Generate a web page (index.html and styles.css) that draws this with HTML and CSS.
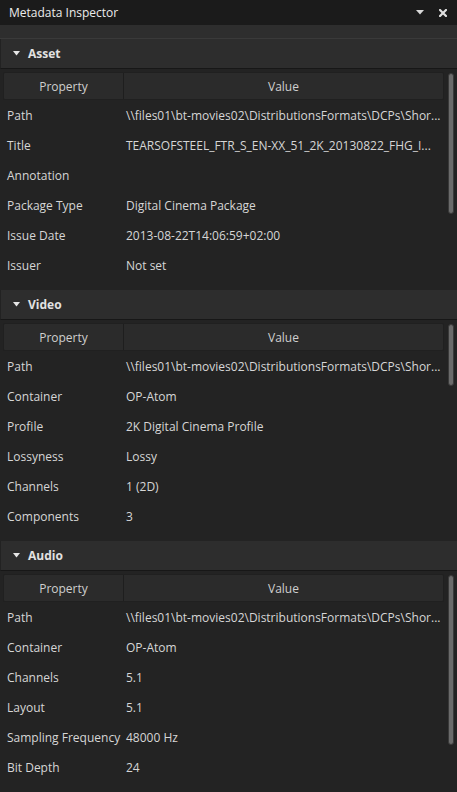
FILE: index.html
```html
<!DOCTYPE html>
<html>
<head>
<meta charset="utf-8">
<link rel="stylesheet" href="styles.css">
</head>
<body>
<div class="panel">
  <div class="titlebar">
    <span class="title">Metadata Inspector</span>
    <span class="tb-icons">
      <svg class="ico-down" width="8" height="5" viewBox="0 0 8 5"><path d="M0 0 H8 L4 4.5 Z" fill="#d8d8d8"/></svg>
      <svg class="ico-close" width="8" height="8" viewBox="0 0 8 8"><path d="M1 1 L7 7 M7 1 L1 7" stroke="#e0e0e0" stroke-width="2.2" stroke-linecap="square"/></svg>
    </span>
  </div>
  <div class="band"></div>

  <div class="section">
    <div class="sec-head">
      <svg class="tri" width="7" height="5" viewBox="0 0 7 5"><path d="M0 0 H7 L3.5 4.5 Z" fill="#e6e6e6"/></svg>
      <span>Asset</span>
    </div>
    <div class="tablewrap">
      <div class="table">
        <div class="thead"><div class="th prop">Property</div><div class="th val">Value</div></div>
        <div class="row"><div class="c prop">Path</div><div class="c val">\\files01\bt-movies02\DistributionsFormats\DCPs\Shor...</div></div>
        <div class="row"><div class="c prop">Title</div><div class="c val">TEARSOFSTEEL_FTR_S_EN-XX_51_2K_20130822_FHG_I...</div></div>
        <div class="row"><div class="c prop">Annotation</div><div class="c val"></div></div>
        <div class="row"><div class="c prop">Package Type</div><div class="c val">Digital Cinema Package</div></div>
        <div class="row"><div class="c prop">Issue Date</div><div class="c val">2013-08-22T14:06:59+02:00</div></div>
        <div class="row"><div class="c prop">Issuer</div><div class="c val">Not set</div></div>
      </div>
      <div class="scroll"><div class="thumb t-asset"></div></div>
    </div>
  </div>

  <div class="section">
    <div class="sec-head">
      <svg class="tri" width="7" height="5" viewBox="0 0 7 5"><path d="M0 0 H7 L3.5 4.5 Z" fill="#e6e6e6"/></svg>
      <span>Video</span>
    </div>
    <div class="tablewrap">
      <div class="table">
        <div class="thead"><div class="th prop">Property</div><div class="th val">Value</div></div>
        <div class="row"><div class="c prop">Path</div><div class="c val">\\files01\bt-movies02\DistributionsFormats\DCPs\Shor...</div></div>
        <div class="row"><div class="c prop">Container</div><div class="c val">OP-Atom</div></div>
        <div class="row"><div class="c prop">Profile</div><div class="c val">2K Digital Cinema Profile</div></div>
        <div class="row"><div class="c prop">Lossyness</div><div class="c val">Lossy</div></div>
        <div class="row"><div class="c prop">Channels</div><div class="c val">1 (2D)</div></div>
        <div class="row"><div class="c prop">Components</div><div class="c val">3</div></div>
      </div>
      <div class="scroll"><div class="thumb t-video"></div></div>
    </div>
  </div>

  <div class="section">
    <div class="sec-head">
      <svg class="tri" width="7" height="5" viewBox="0 0 7 5"><path d="M0 0 H7 L3.5 4.5 Z" fill="#e6e6e6"/></svg>
      <span>Audio</span>
    </div>
    <div class="tablewrap">
      <div class="table">
        <div class="thead"><div class="th prop">Property</div><div class="th val">Value</div></div>
        <div class="row"><div class="c prop">Path</div><div class="c val">\\files01\bt-movies02\DistributionsFormats\DCPs\Shor...</div></div>
        <div class="row"><div class="c prop">Container</div><div class="c val">OP-Atom</div></div>
        <div class="row"><div class="c prop">Channels</div><div class="c val">5.1</div></div>
        <div class="row"><div class="c prop">Layout</div><div class="c val">5.1</div></div>
        <div class="row"><div class="c prop">Sampling Frequency</div><div class="c val">48000 Hz</div></div>
        <div class="row"><div class="c prop">Bit Depth</div><div class="c val">24</div></div>
      </div>
      <div class="scroll"><div class="thumb t-audio"></div></div>
    </div>
  </div>
</div>
</body>
</html>
```

FILE: styles.css
```css
html, body {
  margin: 0;
  padding: 0;
  background: #232323;
}
body {
  font-family: "Open Sans", "Noto Sans", sans-serif;
  font-size: 12px;
  color: #d6d6d6;
  width: 457px;
  height: 792px;
  overflow: hidden;
}
.panel {
  width: 457px;
  height: 792px;
  background: #232323;
  display: flex;
  flex-direction: column;
}
.titlebar {
  height: 25px;
  background: #1b1b1b;
  display: flex;
  align-items: center;
  justify-content: space-between;
  padding: 0 10px 0 9px;
  box-sizing: border-box;
}
.title {
  font-size: 12px;
  color: #ececec;
}
.tb-icons {
  display: flex;
  align-items: center;
  gap: 15px;
}
.band {
  height: 13px;
  background: #2e2e2e;
  border-bottom: 1px solid #3a3a3a;
}
.section {
  display: flex;
  flex-direction: column;
}
.sec-head {
  height: 30px;
  box-sizing: border-box;
  background: #2d2d2d;
  border-bottom: 1px solid #171717;
  border-left: 1px solid #222;
  display: flex;
  align-items: center;
  padding-left: 12px;
  gap: 8px;
  font-weight: bold;
  font-size: 12px;
  color: #e2e2e2;
}
.tablewrap {
  display: flex;
  height: 210px;
  margin: 3px 0 8px 0;
}
.table {
  flex: 1;
  margin-left: 3px;
  display: flex;
  flex-direction: column;
}
.thead {
  height: 28px;
  box-sizing: border-box;
  display: flex;
  background: #2b2b2b;
  border: 1px solid #202020;
  border-radius: 2px;
  color: #cfcfcf;
}
.th {
  display: flex;
  align-items: center;
  justify-content: center;
}
.th.prop {
  width: 119px;
  border-right: 1px solid #1e1e1e;
}
.th.val {
  flex: 1;
}
.row {
  height: 30px;
  display: flex;
  align-items: center;
}
.c {
  white-space: nowrap;
  overflow: hidden;
}
.c.prop {
  width: 120px;
  padding-left: 4px;
  box-sizing: border-box;
}
.c.val {
  flex: 1;
  padding-left: 3px;
}
.scroll {
  width: 13px;
  display: flex;
  justify-content: center;
  padding-top: 1px;
  box-sizing: border-box;
}
.thumb {
  width: 6px;
  background: #6b6b6b;
  border: 1px solid #3a3a3a;
  border-radius: 4px;
  box-sizing: border-box;
}
.t-asset { height: 141px; }
.t-video { height: 62px; }
.t-audio { height: 170px; }
```
